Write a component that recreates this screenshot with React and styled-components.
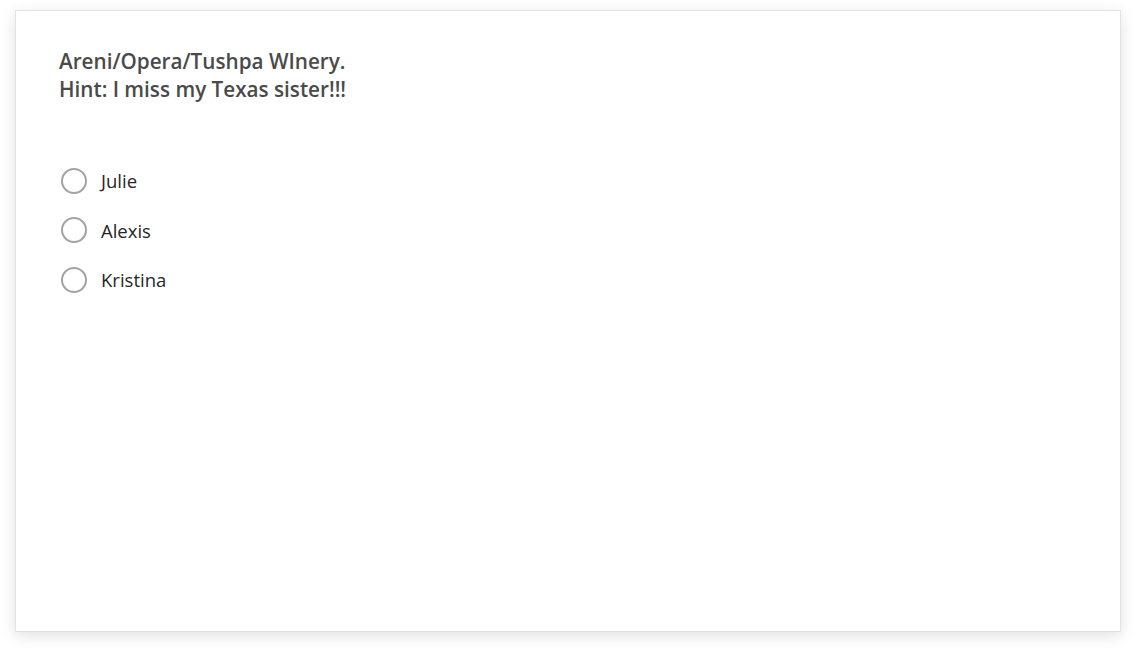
import styled, { createGlobalStyle } from 'styled-components'

const GlobalStyle = createGlobalStyle`
  body {
    margin: 0;
    background: #ffffff;
    font-family: "Open Sans", "Liberation Sans", sans-serif;
  }
`

const Page = styled.div`
  padding: 10px 15px 0 15px;
  width: 1136px;
  height: 652px;
  box-sizing: border-box;
`

const Card = styled.div`
  width: 1106px;
  height: 622px;
  box-sizing: border-box;
  background: #ffffff;
  border: 1px solid #e2e2e2;
  box-shadow: 0 4px 14px rgba(0, 0, 0, 0.12);
  padding: 36px 43px;
`

const Question = styled.h2`
  margin: 0;
  font-size: 20.7px;
  line-height: 28px;
  font-weight: 600;
  color: #4a4a4a;
`

const Options = styled.div`
  display: flex;
  flex-direction: column;
  margin-top: 53px;
`

const Option = styled.label`
  display: flex;
  align-items: center;
  gap: 14px;
  height: 49.5px;
  cursor: pointer;
`

const Circle = styled.span`
  width: 26px;
  height: 26px;
  box-sizing: border-box;
  border-radius: 50%;
  border: 2px solid #a3a3a3;
  margin-left: 2px;
  flex-shrink: 0;
`

const Label = styled.span`
  font-size: 18.5px;
  color: #262626;
`

const choices = ['Julie', 'Alexis', 'Kristina']

function App() {
  return (
    <Page>
      <GlobalStyle />
      <Card>
        <Question>
          Areni/Opera/Tushpa WInery.
          <br />
          Hint: I miss my Texas sister!!!
        </Question>
        <Options>
          {choices.map((name) => (
            <Option key={name}>
              <Circle />
              <Label>{name}</Label>
            </Option>
          ))}
        </Options>
      </Card>
    </Page>
  )
}

export default App
